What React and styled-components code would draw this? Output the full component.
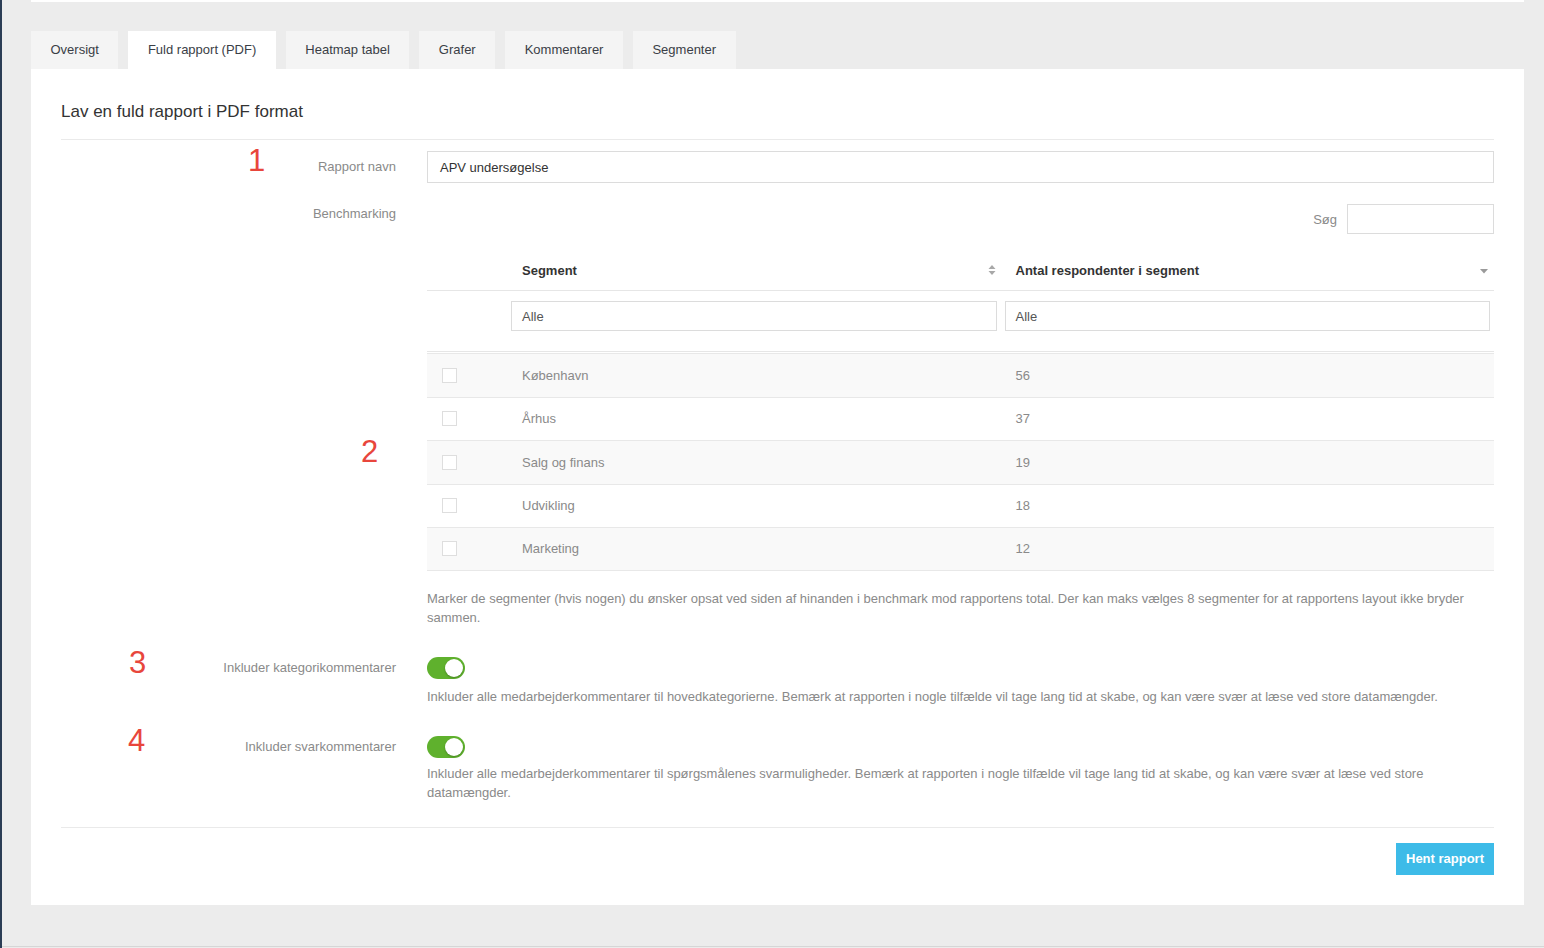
import React from 'react';
import styled, { createGlobalStyle } from 'styled-components';

const GlobalStyle = createGlobalStyle`
  html, body {
    margin: 0;
    padding: 0;
    background: #ececec;
  }
  body {
    font-family: "Liberation Sans", Arial, Helvetica, sans-serif;
    font-size: 13px;
    color: #333;
  }
  * { box-sizing: border-box; }
`;

const Page = styled.div`
  height: 948px;
  background: #ececec;
  border-left: 2px solid #2b3d55;
  padding: 0 20px 0 29px;
  display: flex;
  flex-direction: column;
`;

const TopStrip = styled.div`
  height: 2px;
  background: #fff;
`;

const Tabs = styled.div`
  display: flex;
  gap: 10px;
  margin-top: 29px;
`;

const Tab = styled.div`
  height: 38px;
  display: flex;
  align-items: center;
  padding: 0 19.5px 1px;
  background: ${p => (p.active ? '#fff' : '#f4f4f4')};
  color: #3a3e46;
  font-size: 13px;
  cursor: pointer;
`;

const Panel = styled.div`
  position: relative;
  background: #fff;
  padding: 33px 30px 30px;
`;

const Title = styled.h3`
  margin: 0;
  font-size: 17px;
  font-weight: 400;
  line-height: 20px;
  color: #333;
  padding-bottom: 17px;
  border-bottom: 1px solid #eaeaea;
`;

const Marker = styled.span`
  position: absolute;
  left: ${p => p.x}px;
  top: ${p => p.y}px;
  font-size: 31px;
  line-height: 36px;
  color: #e8463c;
`;

const FormRow = styled.div`
  display: grid;
  grid-template-columns: 335px 1fr;
  column-gap: 31px;
  margin-top: ${p => p.top}px;
`;

const Label = styled.label`
  text-align: right;
  color: #8a8a8a;
  font-size: 13px;
  line-height: 18px;
  padding-top: ${p => p.pad}px;
`;

const Field = styled.div`
  display: flex;
  flex-direction: column;
`;

const TextInput = styled.div`
  height: ${p => p.h || 32}px;
  border: 1px solid #dcdcdc;
  padding: 0 ${p => p.px || 12}px;
  display: flex;
  align-items: center;
  color: ${p => (p.muted ? '#555' : '#333')};
  font-size: 13px;
  background: #fff;
  width: ${p => (p.w ? p.w + 'px' : 'auto')};
`;

const SearchBar = styled.div`
  display: flex;
  justify-content: flex-end;
  align-items: center;
  gap: 10px;
  margin-top: 7px;
  color: #8a8a8a;
`;

const Table = styled.div`
  margin-top: 16px;
  display: flex;
  flex-direction: column;
`;

const Row = styled.div`
  display: grid;
  grid-template-columns: 80px 1fr 1fr;
  align-items: center;
`;

const HeadRow = styled(Row)`
  height: 41px;
  border-bottom: 1px solid #e6e6e6;
`;

const HeadCell = styled.div`
  display: flex;
  align-items: center;
  justify-content: space-between;
  padding: 0 5px 0 15px;
  font-weight: 700;
  color: #333;
  font-size: 13px;
`;

const FilterRow = styled(Row)`
  padding: 10px 0 20px;
  border-bottom: 1px solid #e6e6e6;
`;

const FilterCell = styled.div`
  padding: 0 4px;
`;

const BodyRow = styled(Row)`
  height: 43.5px;
  border-top: 1px solid #e8e8e8;
  background: ${p => (p.odd ? '#f9f9f9' : '#fff')};
  color: #8a8a8a;
  &:first-of-type { margin-top: 1px; }
  &:last-child { border-bottom: 1px solid #e8e8e8; }
`;

const Cell = styled.div`
  padding-left: 15px;
`;

const Checkbox = styled.span`
  display: block;
  width: 15px;
  height: 15px;
  border: 1px solid #dedede;
  background: #fff;
`;

const Help = styled.p`
  margin: ${p => p.top}px 0 0;
  color: #8a8a8a;
  font-size: 13px;
  line-height: 19px;
`;

const Switch = styled.span`
  position: relative;
  display: block;
  width: 38px;
  height: 22px;
  border-radius: 11px;
  background: #5fb12d;
  &::after {
    content: '';
    position: absolute;
    top: 2px;
    right: 2px;
    width: 18px;
    height: 18px;
    border-radius: 50%;
    background: #fff;
    box-shadow: 0 1px 2px rgba(0, 0, 0, 0.25);
  }
`;

const Footer = styled.div`
  margin-top: 25px;
  border-top: 1px solid #eaeaea;
  padding-top: 15px;
  display: flex;
  justify-content: flex-end;
`;

const Button = styled.button`
  height: 32px;
  padding: 0 10px;
  border: none;
  background: #3dbbe8;
  color: #fff;
  font-family: inherit;
  font-size: 13px;
  font-weight: 700;
  cursor: pointer;
`;

const BottomRule = styled.div`
  margin-top: auto;
  margin-bottom: 1px;
  margin-left: -29px;
  margin-right: -20px;
  height: 1px;
  background: #d6d6d6;
`;

const SortBoth = () => (
  <svg width="8" height="12" viewBox="0 0 8 12">
    <path d="M4 1 L7.5 5 H0.5 Z" fill="#a8a8a8" />
    <path d="M4 11 L7.5 7 H0.5 Z" fill="#a8a8a8" />
  </svg>
);

const SortDesc = () => (
  <svg width="10" height="12" viewBox="0 0 10 12">
    <path d="M1 5 H9 L5 9.5 Z" fill="#9a9a9a" />
  </svg>
);

const segments = [
  { name: 'København', count: 56 },
  { name: 'Århus', count: 37 },
  { name: 'Salg og finans', count: 19 },
  { name: 'Udvikling', count: 18 },
  { name: 'Marketing', count: 12 },
];

const tabs = ['Oversigt', 'Fuld rapport (PDF)', 'Heatmap tabel', 'Grafer', 'Kommentarer', 'Segmenter'];

export default function App() {
  return (
    <>
      <GlobalStyle />
      <Page>
        <TopStrip />
        <Tabs>
          {tabs.map(t => (
            <Tab key={t} active={t === 'Fuld rapport (PDF)'}>{t}</Tab>
          ))}
        </Tabs>
        <Panel>
          <Title>Lav en fuld rapport i PDF format</Title>

          <Marker x={217} y={74}>1</Marker>
          <Marker x={330} y={365}>2</Marker>
          <Marker x={98} y={576}>3</Marker>
          <Marker x={97} y={654}>4</Marker>

          <FormRow top={11}>
            <Label pad={7}>Rapport navn</Label>
            <TextInput>APV undersøgelse</TextInput>
          </FormRow>

          <FormRow top={14}>
            <Label pad={8}>Benchmarking</Label>
            <Field>
              <SearchBar>
                Søg
                <TextInput h={30} w={147} />
              </SearchBar>
              <Table>
                <HeadRow>
                  <HeadCell />
                  <HeadCell>
                    Segment
                    <SortBoth />
                  </HeadCell>
                  <HeadCell>
                    Antal respondenter i segment
                    <SortDesc />
                  </HeadCell>
                </HeadRow>
                <FilterRow>
                  <FilterCell />
                  <FilterCell><TextInput h={30} px={10} muted>Alle</TextInput></FilterCell>
                  <FilterCell><TextInput h={30} px={10} muted>Alle</TextInput></FilterCell>
                </FilterRow>
                <div>
                  {segments.map((s, i) => (
                    <BodyRow key={s.name} odd={i % 2 === 0}>
                      <Cell><Checkbox /></Cell>
                      <Cell>{s.name}</Cell>
                      <Cell>{s.count}</Cell>
                    </BodyRow>
                  ))}
                </div>
              </Table>
              <Help top={18}>
                Marker de segmenter (hvis nogen) du ønsker opsat ved siden af hinanden i benchmark mod rapportens total. Der kan maks vælges 8 segmenter for at rapportens layout ikke bryder sammen.
              </Help>
            </Field>
          </FormRow>

          <FormRow top={30}>
            <Label pad={2}>Inkluder kategorikommentarer</Label>
            <Field>
              <Switch />
              <Help top={8}>
                Inkluder alle medarbejderkommentarer til hovedkategorierne. Bemærk at rapporten i nogle tilfælde vil tage lang tid at skabe, og kan være svær at læse ved store datamængder.
              </Help>
            </Field>
          </FormRow>

          <FormRow top={30}>
            <Label pad={2}>Inkluder svarkommentarer</Label>
            <Field>
              <Switch />
              <Help top={6}>
                Inkluder alle medarbejderkommentarer til spørgsmålenes svarmuligheder. Bemærk at rapporten i nogle tilfælde vil tage lang tid at skabe, og kan være svær at læse ved store datamængder.
              </Help>
            </Field>
          </FormRow>

          <Footer>
            <Button>Hent rapport</Button>
          </Footer>
        </Panel>
        <BottomRule />
      </Page>
    </>
  );
}
